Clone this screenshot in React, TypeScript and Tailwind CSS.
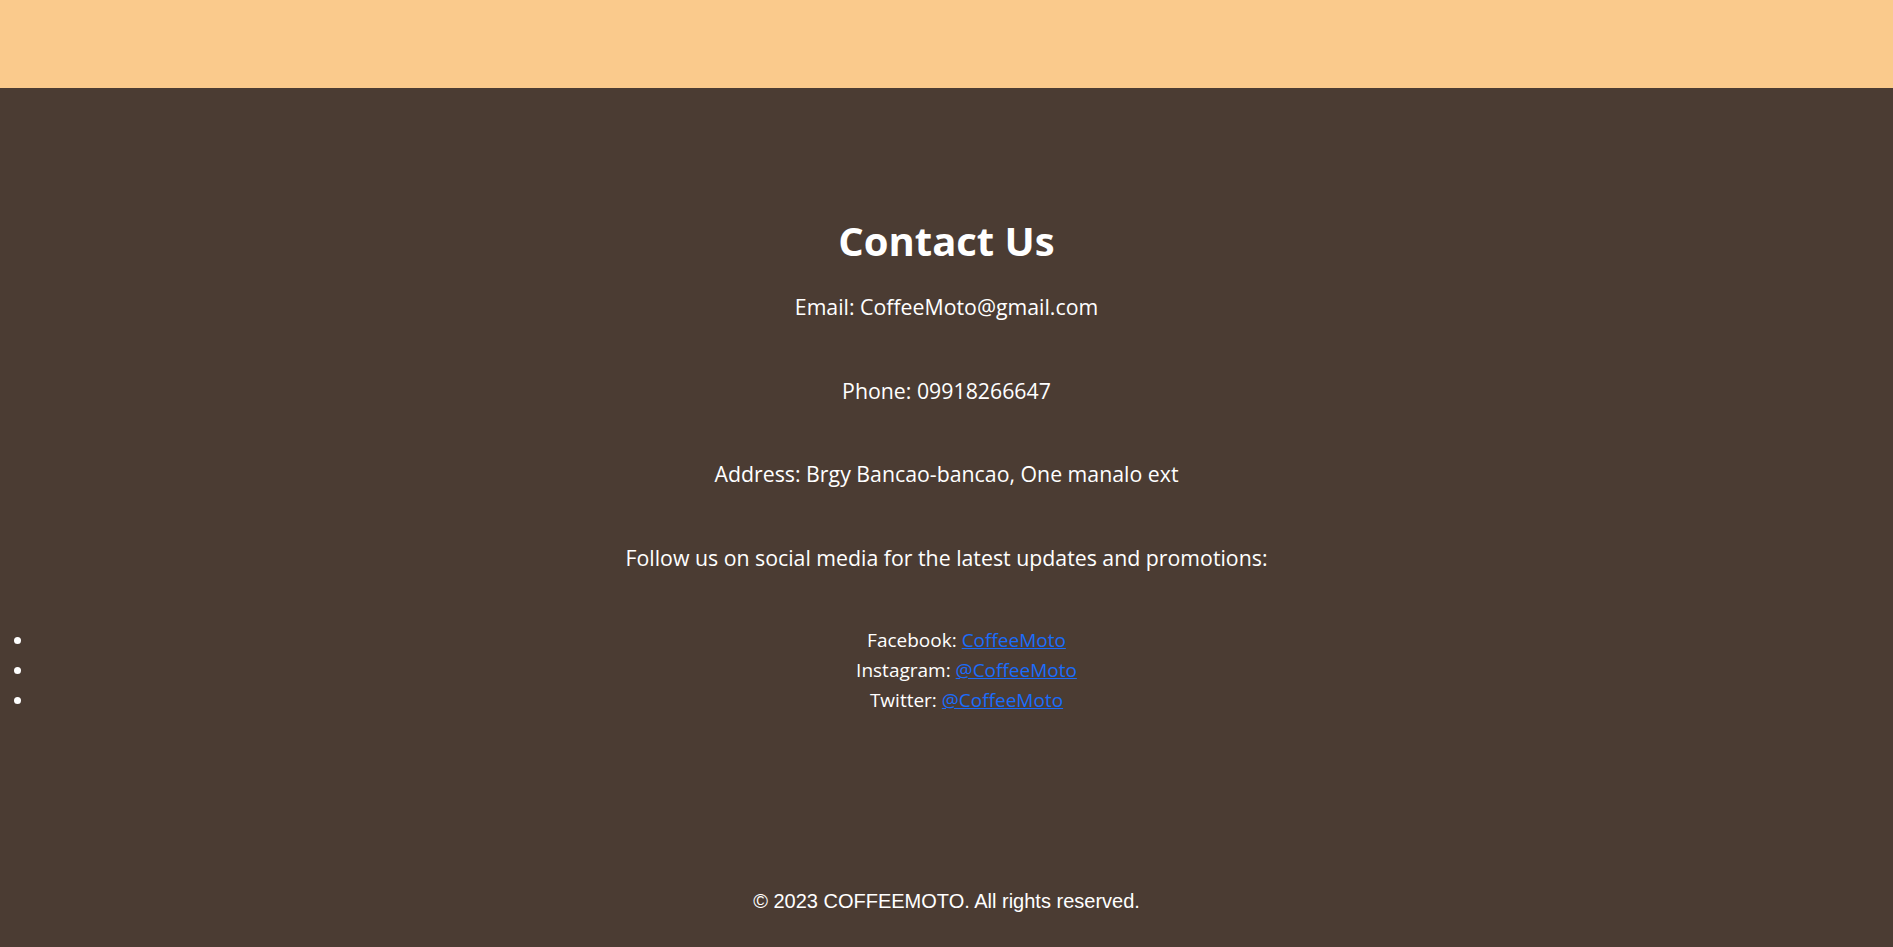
export default function App() {
  const socials = [
    { label: "Facebook:", handle: "CoffeeMoto" },
    { label: "Instagram:", handle: "@CoffeeMoto" },
    { label: "Twitter:", handle: "@CoffeeMoto" },
  ];

  return (
    <div className="flex min-h-[947px] flex-col bg-[#4b3c33] text-white font-['Open_Sans',sans-serif]">
      <header className="h-[88px] shrink-0 bg-[#faca8c]" />

      <section className="flex flex-col items-center pt-[129px] text-center">
        <h1 className="text-[40px] font-bold leading-[48px]">Contact Us</h1>
        <p className="mt-[28px] text-[21.3px] leading-[28px]">Email: CoffeeMoto@gmail.com</p>
        <p className="mt-[56px] text-[21.3px] leading-[28px]">Phone: 09918266647</p>
        <p className="mt-[55px] text-[21.3px] leading-[28px]">
          Address: Brgy Bancao-bancao, One manalo ext
        </p>
        <p className="mt-[56px] text-[21.3px] leading-[28px]">
          Follow us on social media for the latest updates and promotions:
        </p>
      </section>

      <ul className="mt-[53px] list-disc pl-[34px] text-[19px] leading-[30px]">
        {socials.map((s) => (
          <li key={s.label} className="pl-[6px] text-center">
            {s.label}{" "}
            <a href="#" className="text-[#1a6cfb] underline">
              {s.handle}
            </a>
          </li>
        ))}
      </ul>

      <footer className="mt-[174px] pb-[37px] text-center font-['Liberation_Sans',sans-serif] text-[20px] leading-[24px]">
        © 2023 COFFEEMOTO. All rights reserved.
      </footer>
    </div>
  );
}
